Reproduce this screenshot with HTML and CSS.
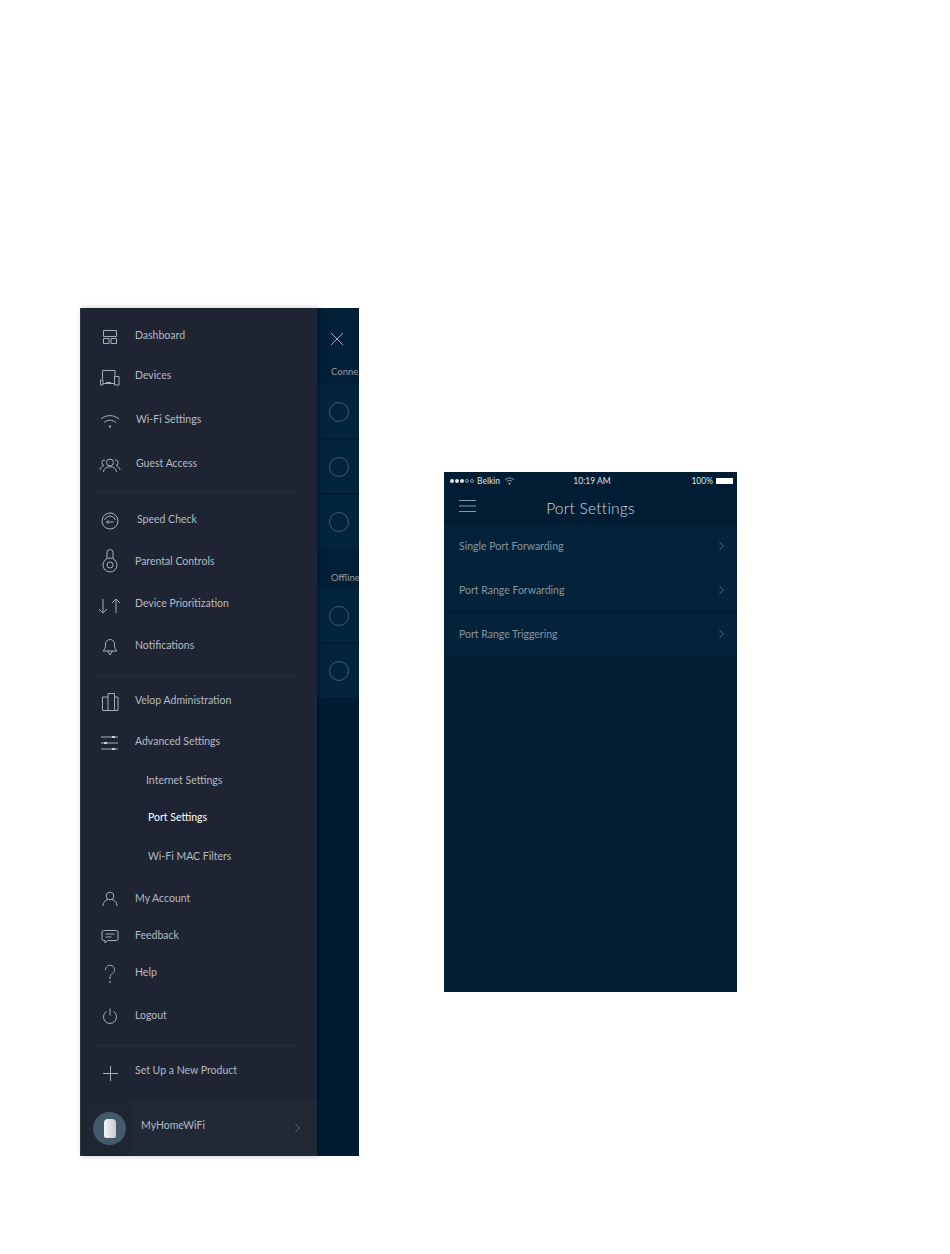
FILE: index.html
```html
<!DOCTYPE html>
<html lang="en">
<head>
    <meta charset="UTF-8">
    <title>Velop Port Settings</title>
    <link rel="stylesheet" href="styles.css">
</head>
<body>
    <div class="page">
        <!-- Menu screen -->
        <div class="phone-menu">
            <nav class="menu">
                <a class="row h40"><svg class="icon" viewBox="0 0 20 20"><path d="M3.500 3.500h13v6h-13zM3.500 11.500h5.500v5h-5.500zM11 11.500h5.500v5h-5.500z"/></svg><span>Dashboard</span></a>
                <a class="row h40"><svg class="icon" viewBox="0 0 20 20"><path d="M2.500 12v-8.500h12.500v5.500M.5 13h2.500v5h-2.500zM14.500 9.500h4.500v8.500h-4.500zM3 16.500h11.500M6 15.500h5"/></svg><span>Devices</span></a>
                <a class="row h48 shift1"><svg class="icon" viewBox="0 0 20 20"><path d="M1 8c5-4.500 13-4.500 18 0M4 11.500c3.500-3 8.500-3 12 0"/><circle class="dot" cx="10" cy="15.500" r="1"/></svg><span>Wi-Fi Settings</span></a>
                <a class="row h40 shift1"><svg class="icon" viewBox="0 0 20 20"><circle cx="10" cy="7.500" r="3.500"/><path d="M3.500 17c0-7 13-7 13 0M5 5a2.800 2.800 0 0 0-1 5.500c-2 .5-4 2.500-4 4.500M15 5a2.800 2.800 0 0 1 1 5.500c2 .5 4 2.500 4 4.500"/></svg><span>Guest Access</span></a>
                <hr class="rule first">
                <a class="row h42 shift2"><svg class="icon" viewBox="0 0 20 20"><circle cx="10" cy="10" r="8"/><path d="M4.500 9a5.800 5.800 0 0 1 11 0M6.500 11h7M8.500 9.500l-2 1.500 2 1.500"/></svg><span>Speed Check</span></a>
                <a class="row h42"><svg class="icon" viewBox="0 0 20 20"><path d="M7 5.500v-6a3 3 0 0 1 6 0v6"/><circle cx="10" cy="12" r="7"/><circle cx="10" cy="12" r="3"/></svg><span>Parental Controls</span></a>
                <a class="row h42"><svg class="icon" viewBox="0 0 20 20"><path d="M3 4v14M-1 14l4 4 4-4M16 18v-14M12 8l4-4 4 4"/></svg><span>Device Prioritization</span></a>
                <a class="row h42"><svg class="icon" viewBox="0 0 20 20"><path d="M3 14c2-2 2.500-3 2.500-7a4.500 4.500 0 0 1 9 0c0 4 .5 5 2.500 7zM7.500 14l2.500 4 2.500-4"/></svg><span>Notifications</span></a>
                <hr class="rule second">
                <a class="row h40"><svg class="icon" viewBox="0 0 20 20"><path d="M8 1.500h6.500v17h-6.500zM8 5h-5.500v13.500h5.500M14.500 5h3.500v13.500h-3.500"/></svg><span>Velop Administration</span></a>
                <a class="row h42"><svg class="icon" viewBox="0 0 20 20"><path d="M1 4h17M1 10h17M1 16h17"/><path class="dot" d="M12 3h3v2h-3zM4 9h3v2h-3zM12 15h3v2h-3z"/></svg><span>Advanced Settings</span></a>
                <a class="row sub h36 internet"><span>Internet Settings</span></a>
                <a class="row sub h38 current"><span>Port Settings</span></a>
                <a class="row sub h40"><span>Wi-Fi MAC Filters</span></a>
                <a class="row h44"><svg class="icon" viewBox="0 0 20 20"><circle cx="10" cy="6" r="3.800"/><path d="M3 16c0-4 2.500-6 5-6.500M17 16c0-4-2.500-6-5-6.500"/></svg><span>My Account</span></a>
                <a class="row h30"><svg class="icon" viewBox="0 0 20 20"><path d="M3.500 3.500h13a1.500 1.500 0 0 1 1.500 1.500v7a1.500 1.500 0 0 1-1.500 1.500h-9l-2.500 2.500v-2.500h-1.500a1.500 1.500 0 0 1-1.500-1.500v-7a1.500 1.500 0 0 1 1.500-1.500zM5.500 7h9M5.500 10h6"/></svg><span>Feedback</span></a>
                <a class="row h44"><svg class="icon" viewBox="0 0 20 20"><path d="M5.500 6a4.500 4.500 0 1 1 7 3.500c-2 1.500-2.500 2-2.500 4.500v1"/><circle class="dot" cx="10" cy="18" r=".8"/></svg><span>Help</span></a>
                <a class="row h42"><svg class="icon" viewBox="0 0 20 20"><path d="M6.500 4.500a6.500 6.500 0 1 0 7 0M10 1.500v7"/></svg><span>Logout</span></a>
                <hr class="rule third">
                <a class="row h40"><svg class="icon" viewBox="0 0 20 20"><path d="M10.500 4v15M3 11.500h15"/></svg><span>Set Up a New Product</span></a>
                <div class="node">
                    <div class="node-badge"><div class="node-tower"></div></div>
                    <span class="node-name">MyHomeWiFi</span>
                    <svg class="chevron" viewBox="0 0 8 12"><path d="M1.500 1.500l5 4.500-5 4.500"/></svg>
                </div>
            </nav>
            <div class="behind">
                <div class="behind-top">
                    <svg class="close" viewBox="0 0 14 14"><path d="M1 1l12 12M13 1l-12 12"/></svg>
                    <div class="behind-label">Conne</div>
                </div>
                <div class="device"><i></i></div>
                <div class="device"><i></i></div>
                <div class="device"><i></i></div>
                <div class="behind-label offline">Offline</div>
                <div class="device"><i></i></div>
                <div class="device"><i></i></div>
            </div>
        </div>

        <!-- Port settings screen -->
        <div class="phone-port">
            <div class="status">
                <div class="carrier">
                    <span class="signal"><b></b><b></b><b></b><u></u><u></u></span>
                    <span>Belkin</span>
                    <svg class="status-wifi" viewBox="0 0 12 9"><path d="M1 3c3-2.500 7-2.500 10 0M3 5c2-1.500 4-1.500 6 0"/><circle class="dot" cx="6" cy="7.500" r="1"/></svg>
                </div>
                <div class="clock">10:19 AM</div>
                <div class="battery"><span>100%</span><div class="cell"></div></div>
            </div>
            <header class="title-bar">
                <svg class="burger" viewBox="0 0 17 12"><path d="M0 .5h17M0 6h17M0 11.500h17"/></svg>
                <h1>Port Settings</h1>
            </header>
            <ul class="port-list">
                <li>Single Port Forwarding<svg class="chevron" viewBox="0 0 8 12"><path d="M1.500 1.500l5 4.500-5 4.500"/></svg></li>
                <li>Port Range Forwarding<svg class="chevron" viewBox="0 0 8 12"><path d="M1.500 1.500l5 4.500-5 4.500"/></svg></li>
                <li>Port Range Triggering<svg class="chevron" viewBox="0 0 8 12"><path d="M1.500 1.500l5 4.500-5 4.500"/></svg></li>
            </ul>
        </div>
    </div>
</body>
</html>
```

FILE: styles.css
```css
/* Global Styles */
body {
    margin: 0;
    background: #fff;
    font-family: 'Lato', 'Liberation Sans', sans-serif;
    color: #b4bbc3;
}

.page {
    display: flex;
    align-items: flex-start;
    height: 1254px;
    padding: 308px 0 0 80px;
    box-sizing: border-box;
}

svg {
    fill: none;
    stroke: #a9afb7;
    stroke-width: 1;
    overflow: visible;
}

svg .dot {
    fill: #c9ced4;
    stroke: none;
}

/* Menu screen */
.phone-menu {
    display: flex;
    width: 279px;
    height: 848px;
    background: #001c32;
}

.menu {
    display: flex;
    flex-direction: column;
    width: 237px;
    padding-top: 7px;
    box-sizing: border-box;
    background: #1e2431;
    border-left: 1px solid #2f3542;
    box-shadow: 2px 0 5px rgba(0, 0, 0, 0.25);
    z-index: 1;
}

.row {
    display: flex;
    align-items: center;
    padding-left: 54px;
    position: relative;
    font-size: 10.5px;
}

.h30 { height: 30px; }
.h36 { height: 36px; }
.h38 { height: 38px; }
.h40 { height: 40px; }
.h42 { height: 42px; }
.h44 { height: 44px; }
.h48 { height: 48px; }

.shift1 { padding-left: 55px; }
.shift2 { padding-left: 56px; }

/* icons sit a little under the middle of their label */
.icon {
    position: absolute;
    left: 19px;
    top: calc(50% + 2px);
    width: 20px;
    height: 20px;
    transform: translateY(-50%);
}

.sub { padding-left: 67px; }
.sub.internet { padding-left: 65px; }
.sub.current { color: #fff; }

.rule {
    width: 202px;
    height: 1px;
    margin: 0 0 0 14px;
    border: none;
    background: #282e3a;
}

.rule.first { margin-top: 9px; margin-bottom: 5px; }
.rule.second { margin-top: 9px; margin-bottom: 4px; }
.rule.third { margin-top: 9px; margin-bottom: 4px; }

.node {
    display: flex;
    align-items: center;
    height: 56px;
    margin-top: 10px;
    padding: 0 16px 0 12px;
    background: linear-gradient(90deg, #1f2632 51px, #222935 51px);
    font-size: 10.5px;
}

.node-badge {
    display: flex;
    align-items: center;
    justify-content: center;
    width: 33px;
    height: 33px;
    border-radius: 50%;
    background: #44596a;
}

.node-tower {
    width: 12px;
    height: 19px;
    border-radius: 4px 4px 2px 2px;
    background: linear-gradient(90deg, #f4f5f6, #c5cad0);
}

.node-name {
    margin: 0 0 7px 15px;
}

.chevron {
    width: 7px;
    height: 10px;
    margin-left: auto;
    stroke: #6d7682;
}

/* What shows behind the menu */
.behind {
    flex: 1;
    overflow: hidden;
    display: flex;
    flex-direction: column;
    color: #939ea8;
}

.behind-top {
    flex: none;
    height: 77px;
    background: #011f37;
}

.close {
    display: block;
    width: 14px;
    height: 14px;
    margin: 24px 0 0 13px;
}

.behind-label {
    height: 39px;
    padding: 20px 0 0 14px;
    box-sizing: border-box;
    font-size: 9.5px;
    line-height: 12px;
    white-space: nowrap;
}

.behind-top .behind-label {
    height: auto;
}

.behind-label.offline {
    flex: none;
    padding-top: 24px;
    margin-top: -2px;
    height: 41px;
    background: #011f37;
}

.device {
    flex: none;
    display: flex;
    align-items: center;
    height: 53px;
    margin-bottom: 2px;
    padding-left: 12px;
    background: #03253c;
}

.device i {
    width: 18px;
    height: 18px;
    border: 1px solid #415e6f;
    border-radius: 50%;
}

/* Port settings screen */
.phone-port {
    width: 293px;
    height: 520px;
    margin: 164px 0 0 85px;
    background: #011d33;
    color: #87939f;
}

.status {
    display: grid;
    grid-template-columns: 1fr auto 1fr;
    align-items: center;
    height: 18px;
    padding: 0 3px 0 6px;
    font-size: 8.5px;
    color: #dfe3e7;
}

.carrier, .battery {
    display: flex;
    align-items: center;
    gap: 3px;
}

.battery { justify-content: flex-end; }

.signal {
    display: flex;
    gap: 1px;
}

.signal b, .signal u {
    width: 4px;
    height: 4px;
    border-radius: 50%;
    box-sizing: border-box;
    background: #dfe3e7;
}

.signal u {
    background: none;
    border: 1px solid #8e9aa6;
}

.status-wifi {
    width: 11px;
    height: 8px;
    margin-left: 1px;
}

.cell {
    width: 17px;
    height: 6px;
    margin-right: 1px;
    background: #fff;
    box-shadow: 1px 0 0 -2px #fff, 2px 0 0 -2px #cfd4d8;
}

.title-bar {
    position: relative;
    height: 35px;
    display: flex;
    align-items: center;
    justify-content: center;
}

.burger {
    position: absolute;
    left: 15px;
    top: 10px;
    width: 17px;
    height: 12px;
    stroke: #8f99a4;
}

h1 {
    margin: 0;
    font-size: 15.5px;
    font-weight: 300;
    letter-spacing: 0.25px;
    color: #d5dade;
}

.port-list {
    margin: 0;
    padding: 0;
    list-style: none;
}

.port-list li {
    display: flex;
    align-items: center;
    height: 42px;
    margin-bottom: 2px;
    padding: 0 12px 0 15px;
    background: #04233a;
    font-size: 10.5px;
}
```
